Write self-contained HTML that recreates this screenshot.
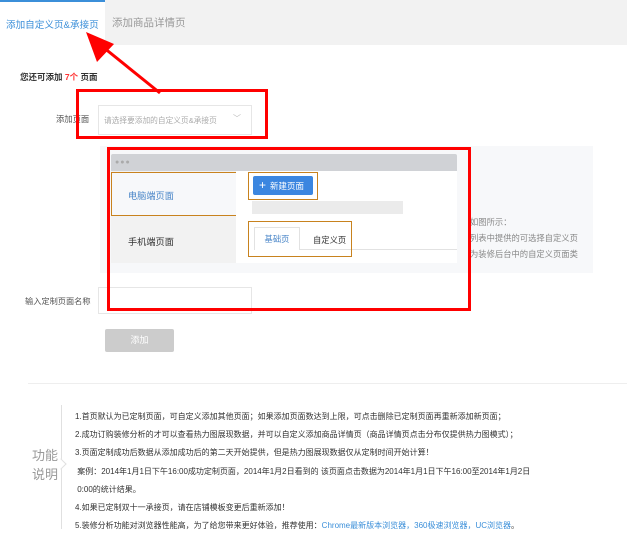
<!DOCTYPE html>
<html><head><meta charset="utf-8"><style>
body{margin:0;width:627px;height:529px;position:relative;background:#fff;font-family:"Liberation Sans","Noto Sans CJK SC",sans-serif;overflow:hidden}
.a{position:absolute;white-space:nowrap}
</style></head><body>
<div class="a" style="left:105px;top:0;width:522px;height:45px;background:#f2f2f2"></div>
<div class="a" style="left:0;top:0;width:105px;height:46px;border-top:2px solid #3b8fd9;box-sizing:border-box;background:#fff"></div>
<div class="a" style="left:6px;top:17px;font-size:9.6px;color:#3b8fd9">添加自定义页&amp;承接页</div>
<div class="a" style="left:112px;top:15px;font-size:10.5px;color:#999">添加商品详情页</div>
<div class="a" style="left:20px;top:71px;font-size:8.5px;color:#333;font-weight:bold">您还可添加 <span style="color:#f33">7个</span> 页面</div>
<div class="a" style="left:56px;top:113px;font-size:8.3px;color:#555">添加页面</div>
<div class="a" style="left:98px;top:105px;width:154px;height:30px;border:1px solid #e6e6e6;box-sizing:border-box;background:#fff"></div>
<div class="a" style="left:104px;top:115px;font-size:7.7px;color:#aaa">请选择要添加的自定义页&amp;承接页</div>
<div class="a" style="left:233px;top:113px;font-size:8px;color:#bbb">﹀</div>
<div class="a" style="left:76px;top:89px;width:192px;height:50px;border:3px solid #f00;box-sizing:border-box"></div>
<div class="a" style="left:100px;top:146px;width:493px;height:127px;background:#f7f8fa"></div>
<div class="a" style="left:111px;top:154px;width:346px;height:17px;background:#d0d2d6;border-radius:2px 2px 0 0"></div>
<div class="a" style="left:115px;top:159px;font-size:7px;color:#aaa;letter-spacing:1px">●●●</div>
<div class="a" style="left:111px;top:171px;width:125px;height:92px;background:#f2f2f2"></div>
<div class="a" style="left:111px;top:172px;width:126px;height:44px;background:#f7f8fa;border:1px solid #c8821e;box-sizing:border-box"></div>
<div class="a" style="left:128px;top:188px;font-size:9.2px;color:#4a86c8">电脑端页面</div>
<div class="a" style="left:128px;top:234px;font-size:9.2px;color:#333">手机端页面</div>
<div class="a" style="left:236px;top:171px;width:221px;height:92px;background:#fff"></div>
<div class="a" style="left:253px;top:176px;width:60px;height:19px;background:#3b86e0;border-radius:2px;color:#fff;font-size:8.5px;line-height:19px"><span style="font-size:12px;margin:0 4px 0 6px">+</span>新建页面</div>
<div class="a" style="left:248px;top:172px;width:70px;height:28px;border:1px solid #c8821e;box-sizing:border-box"></div>
<div class="a" style="left:252px;top:201px;width:151px;height:13px;background:#ebebeb"></div>
<div class="a" style="left:254px;top:249px;width:203px;height:1px;background:#e2e2e2"></div>
<div class="a" style="left:254px;top:227px;width:46px;height:23px;background:#fff;border:1px solid #e2e2e2;border-bottom:none;box-sizing:border-box;font-size:8.3px;color:#4a86c8;text-align:center;line-height:22px">基础页</div>
<div class="a" style="left:313px;top:234px;font-size:8.3px;color:#333">自定义页</div>
<div class="a" style="left:248px;top:221px;width:104px;height:36px;border:1px solid #c8821e;box-sizing:border-box"></div>
<div class="a" style="left:470px;top:214px;font-size:8.3px;color:#888;line-height:16px">如图所示：<br>列表中提供的可选择自定义页<br>为装修后台中的自定义页面类</div>
<div class="a" style="left:25px;top:295px;font-size:8.2px;color:#555">输入定制页面名称</div>
<div class="a" style="left:98px;top:287px;width:154px;height:27px;border:1px solid #e6e6e6;box-sizing:border-box"></div>
<div class="a" style="left:107px;top:147px;width:364px;height:164px;border:3px solid #f00;box-sizing:border-box"></div>
<div class="a" style="left:105px;top:329px;width:69px;height:23px;background:#ccc;border-radius:2px;color:#fff;font-size:9px;text-align:center;line-height:23px">添加</div>
<div class="a" style="left:28px;top:383px;width:599px;height:1px;background:#eee"></div>
<div class="a" style="left:32px;top:446px;font-size:13px;color:#999;line-height:19px">功能<br>说明</div>
<div class="a" style="left:61px;top:405px;width:1px;height:124px;background:#e0e0e0"></div>
<div class="a" style="left:57px;top:460px;width:7px;height:7px;border-right:1px solid #e0e0e0;border-top:1px solid #e0e0e0;background:#fff;transform:rotate(45deg)"></div>
<div class="a" style="left:75px;top:408px;font-size:8px;color:#333;line-height:18.2px">1.首页默认为已定制页面，可自定义添加其他页面；如果添加页面数达到上限，可点击删除已定制页面再重新添加新页面；<br>2.成功订购装修分析的才可以查看热力图展现数据，并可以自定义添加商品详情页（商品详情页点击分布仅提供热力图模式）；<br>3.页面定制成功后数据从添加成功后的第二天开始提供，但是热力图展现数据仅从定制时间开始计算！<br>&nbsp;案例：2014年1月1日下午16:00成功定制页面，2014年1月2日看到的 该页面点击数据为2014年1月1日下午16:00至2014年1月2日<br>&nbsp;0:00的统计结果。<br>4.如果已定制双十一承接页，请在店铺模板变更后重新添加！<br>5.装修分析功能对浏览器性能高，为了给您带来更好体验，推荐使用：<span style="color:#3b8fd9">Chrome最新版本浏览器，360极速浏览器，UC浏览器</span>。</div>
<svg class="a" style="left:0;top:0" width="627" height="529"><line x1="160" y1="93" x2="98" y2="43" stroke="#f00" stroke-width="3"/><polygon points="86,32 114,44 97,62" fill="#f00"/></svg>
</body></html>
